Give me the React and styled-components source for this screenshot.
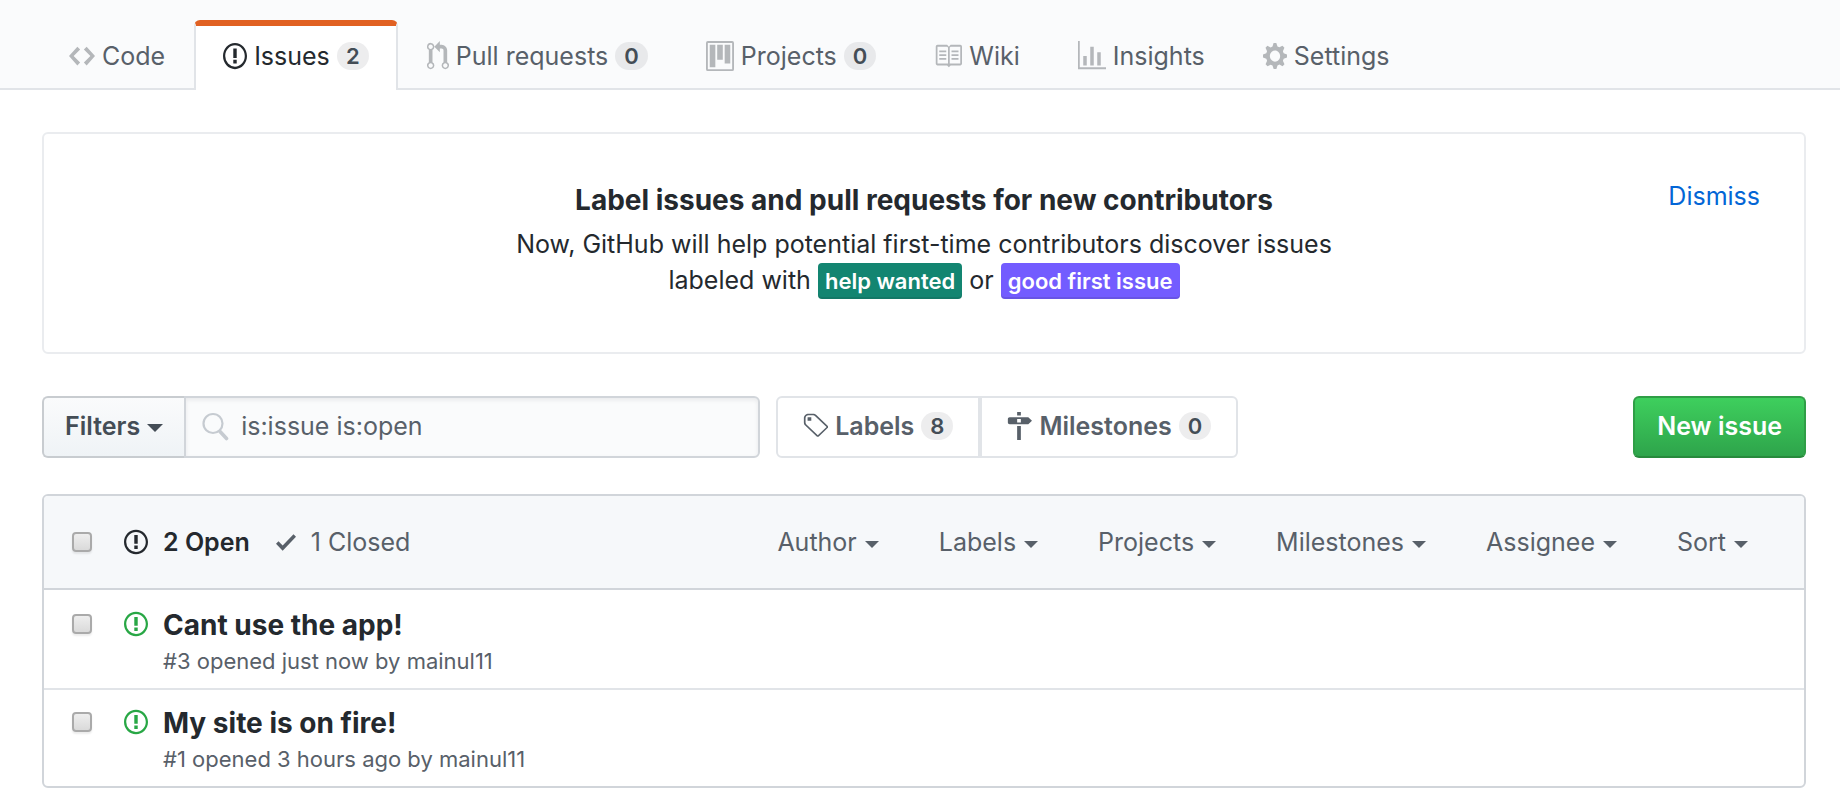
import React, { useState } from "react";
import styled, { createGlobalStyle, css } from "styled-components";

const GlobalStyle = createGlobalStyle`
  * {
    box-sizing: border-box;
  }
  body {
    margin: 0;
    background: #fff;
    color: #24292e;
    font-family: Inter, "Liberation Sans", sans-serif;
    font-size: 25px;
    line-height: 36px;
  }
  button, input {
    font: inherit;
  }
  a {
    color: inherit;
    text-decoration: none;
  }
`;

const paths = {
  code: [14, "M9.5 3L8 4.5 11.5 8 8 11.5 9.5 13 14 8 9.5 3zm-5 0L0 8l4.5 5L6 11.5 2.5 8 6 4.5 4.5 3z"],
  issue: [14, "M7 2.3c3.14 0 5.7 2.56 5.7 5.7s-2.56 5.7-5.7 5.7A5.71 5.71 0 0 1 1.3 8c0-3.14 2.56-5.7 5.7-5.7zM7 1C3.14 1 0 4.14 0 8s3.14 7 7 7 7-3.14 7-7-3.14-7-7-7zm1 3H6v5h2V4zm0 6H6v2h2v-2z"],
  pull: [12, "M11 11.28V5c-.03-.78-.34-1.47-.94-2.06C9.46 2.35 8.78 2.03 8 2H7V0L4 3l3 3V4h1c.27.02.48.11.69.31.21.2.3.42.31.69v6.28A1.993 1.993 0 0 0 10 15a1.993 1.993 0 0 0 1-3.72zm-1 2.92c-.66 0-1.2-.55-1.2-1.2 0-.65.55-1.2 1.2-1.2.65 0 1.2.55 1.2 1.2 0 .65-.55 1.2-1.2 1.2zM4 3c0-1.11-.89-2-2-2a1.993 1.993 0 0 0-1 3.72v6.56A1.993 1.993 0 0 0 2 15a1.993 1.993 0 0 0 1-3.72V4.72c.59-.34 1-.98 1-1.72zm-.8 10c0 .66-.55 1.2-1.2 1.2-.65 0-1.2-.55-1.2-1.2 0-.65.55-1.2 1.2-1.2.65 0 1.2.55 1.2 1.2zM2 4.2C1.34 4.2.8 3.65.8 3c0-.65.55-1.2 1.2-1.2.65 0 1.2.55 1.2 1.2 0 .65-.55 1.2-1.2 1.2z"],
  project: [15, "M10 12h3V2h-3v10zm-4-2h3V2H6v8zm-4 4h3V2H2v12zm-1 1h13V1H1v14zM14 0H1a1 1 0 0 0-1 1v14a1 1 0 0 0 1 1h13a1 1 0 0 0 1-1V1a1 1 0 0 0-1-1z"],
  book: [16, "M3 5h4v1H3V5zm0 3h4V7H3v1zm0 2h4V9H3v1zm11-5h-4v1h4V5zm0 2h-4v1h4V7zm0 2h-4v1h4V9zm2-6v9c0 .55-.45 1-1 1H9.5l-1 1-1-1H2c-.55 0-1-.45-1-1V3c0-.55.45-1 1-1h5.5l1 1 1-1H15c.55 0 1 .45 1 1zm-8 .5L7.5 3H2v9h6V3.5zm7-.5H9.5l-.5.5V12h6V3z"],
  graph: [16, "M16 14v1H0V0h1v14h15zM5 13H3V8h2v5zm4 0H7V3h2v10zm4 0h-2V6h2v7z"],
  gear: [14, "M14 8.77v-1.6l-1.94-.64-.45-1.09.88-1.84-1.13-1.13-1.81.91-1.09-.45-.69-1.92h-1.6l-.63 1.94-1.11.45-1.84-.88-1.13 1.13.91 1.81-.45 1.09L0 7.23v1.59l1.94.64.45 1.09-.88 1.84 1.13 1.13 1.81-.91 1.09.45.69 1.92h1.59l.63-1.94 1.11-.45 1.84.88 1.13-1.13-.92-1.81.47-1.09L14 8.75v.02zM7 11c-1.66 0-3-1.34-3-3s1.34-3 3-3 3 1.34 3 3-1.34 3-3 3z"],
  tag: [14, "M7.73 1.73C7.26 1.26 6.62 1 5.96 1H3.5C2.13 1 1 2.13 1 3.5v2.47c0 .66.27 1.3.73 1.77l6.06 6.06c.39.39 1.02.39 1.41 0l4.59-4.59a.996.996 0 0 0 0-1.41L7.73 1.73zM2.38 7.09c-.31-.3-.47-.7-.47-1.13V3.5c0-.88.72-1.59 1.59-1.59h2.47c.42 0 .83.16 1.13.47l6.14 6.13-4.73 4.73-6.13-6.15zM3.01 3h2v2H3V3h.01z"],
  milestone: [14, "M8 2H6V0h2v2zm4 5H2c-.55 0-1-.45-1-1V4c0-.55.45-1 1-1h10l2 2-2 2zM8 4H6v2h2V4zM6 16h2V8H6v8z"],
  check: [12, "M12 5l-8 8-4-4 1.5-1.5L4 10l6.5-6.5L12 5z"],
};

const Svg = styled.svg`
  display: block;
  flex: none;
  width: ${(p) => p.$width}px;
  height: ${(p) => p.$height}px;
  fill: currentColor;
`;

const Icon = ({ name, width = 24, height = 28 }) => (
  <Svg
    $width={width}
    $height={height}
    viewBox={`0 0 ${paths[name][0]} 16`}
    preserveAspectRatio="none"
    aria-hidden="true"
  >
    <path fillRule="evenodd" d={paths[name][1]} />
  </Svg>
);

const TabBar = styled.nav`
  display: flex;
  height: 90px;
  padding: 20px 40px 0;
  background: #fafbfc;
  border-bottom: 2px solid #e1e4e8;
`;

const Tab = styled.a`
  display: flex;
  align-items: center;
  gap: 7px;
  height: 70px;
  padding: 0 27px 5px;
  border: 2px solid transparent;
  border-top-width: 6px;
  border-bottom: 0;
  border-radius: 6px 6px 0 0;
  color: #586069;
  white-space: nowrap;

  ${Svg} {
    color: #b4b7ba;
  }

  ${(p) =>
    p.$active &&
    css`
      background: #fff;
      border-color: #e16122 #e1e4e8 transparent;
      color: #24292e;

      ${Svg} {
        color: inherit;
      }
    `}
`;

const Counter = styled.span`
  min-width: 32px;
  padding: 0 9px;
  border-radius: 14px;
  background: rgba(27, 31, 35, 0.08);
  color: #444d56;
  font-size: 22px;
  font-weight: 600;
  line-height: 28px;
  text-align: center;
`;

const Main = styled.main`
  padding: 42px 34px 22px 42px;
`;

const Banner = styled.section`
  display: grid;
  grid-template-columns: 1fr auto 1fr;
  min-height: 222px;
  padding: 44px;
  border: 2px solid #eaecef;
  border-radius: 6px;
  text-align: center;
`;

const BannerText = styled.div`
  grid-column: 2;
  max-width: 840px;

  h1 {
    margin: 0 0 4px;
    font-size: 28px;
    font-weight: 700;
    line-height: 44px;
  }
  p {
    margin: 0;
  }
`;

const Label = styled.span`
  display: inline-block;
  padding: 0 7px;
  border-radius: 4px;
  background: ${(p) => p.$color};
  box-shadow: inset 0 -2px 0 rgba(27, 31, 35, 0.12);
  color: #fff;
  font-size: 22px;
  font-weight: 600;
  line-height: 36px;
`;

const Dismiss = styled.button`
  align-self: start;
  justify-self: end;
  padding: 0;
  border: 0;
  background: none;
  color: #0366d6;
  cursor: pointer;
`;

const Toolbar = styled.div`
  display: flex;
  height: 62px;
  margin: 42px 0 36px;
`;

const FilterButton = styled.button`
  display: flex;
  align-items: center;
  gap: 7px;
  padding: 0 21px 2px;
  border: 2px solid #c8ccd0;
  border-right: 0;
  border-radius: 6px 0 0 6px;
  background: linear-gradient(#fafbfc, #eff3f6);
  color: #444d56;
  font-weight: 600;
`;

const Caret = styled.span`
  margin-top: 4px;
  border: ${(p) => p.$size}px solid transparent;
  border-top-color: currentColor;
  border-bottom: 0;
`;

const SearchBox = styled.label`
  display: flex;
  flex: 0 1 576px;
  align-items: center;
  gap: 12px;
  padding: 0 16px 2px;
  border: 2px solid #d1d5da;
  border-radius: 0 6px 6px 0;
  background: #fafbfc;
  box-shadow: inset 0 2px 4px rgba(27, 31, 35, 0.08);

  svg {
    flex: none;
    width: 27px;
    height: 29px;
    fill: none;
    stroke: #c6cbd1;
  }
  input {
    flex: 1;
    min-width: 0;
    padding: 0;
    border: 0;
    outline: 0;
    background: none;
    color: #586069;
  }
`;

const SubNav = styled.nav`
  display: flex;
  margin-left: 16px;
`;

const SubNavLink = styled.a`
  display: flex;
  align-items: center;
  gap: 7px;
  padding: 0 25px 2px 24px;
  border: 2px solid #e1e4e8;
  color: #586069;
  font-weight: 600;

  &:first-child {
    border-radius: 6px 0 0 6px;
  }
  &:last-child {
    border-radius: 0 6px 6px 0;
  }
`;

const NewIssue = styled.button`
  margin-left: auto;
  padding: 0 22px 2px;
  border: 2px solid #2f9e46;
  border-bottom-color: #278a3c;
  border-radius: 6px;
  background: linear-gradient(#3ecf5d, #2ea44b);
  color: #fff;
  font-weight: 600;
  white-space: nowrap;
`;

const List = styled.section`
  border: 2px solid #d1d5da;
  border-radius: 6px;
`;

const ListHeader = styled.header`
  display: flex;
  align-items: center;
  height: 94px;
  padding: 0 56px 0 28px;
  border-bottom: 2px solid #d1d5da;
  border-radius: 4px 4px 0 0;
  background: #f6f8fa;
`;

const Checkbox = styled.input.attrs({ type: "checkbox" })`
  appearance: none;
  flex: none;
  width: 20px;
  height: 20px;
  margin: 0 32px 0 0;
  border: 2px solid #aaa;
  border-radius: 4px;
  background: linear-gradient(#eee, #dadada);
  box-shadow: 0 2px 2px rgba(0, 0, 0, 0.08);

  &:checked {
    background: #0366d6;
  }
`;

const StateLink = styled.a`
  display: flex;
  align-items: center;
  gap: 15px;
  margin-right: 26px;
  color: ${(p) => (p.$selected ? "#24292e" : "#586069")};
  font-weight: ${(p) => (p.$selected ? 600 : 400)};
`;

const Menus = styled.div`
  display: flex;
  gap: 60px;
  margin-left: auto;
`;

const MenuButton = styled.button`
  display: flex;
  align-items: center;
  gap: 8px;
  padding: 0;
  border: 0;
  background: none;
  color: #586069;
`;

const Rows = styled.ul`
  margin: 0;
  padding: 0;
  list-style: none;
`;

const Row = styled.li`
  display: flex;
  height: 98px;
  padding: 22px 28px 0;
  border-top: 2px solid #e1e4e8;

  &:first-child {
    border-top-color: transparent;
  }
`;

const OpenMark = styled.span`
  display: flex;
  align-items: center;
  height: 20px;
  margin-right: 15px;
  color: #28a745;
`;

const RowText = styled.div`
  margin-top: -8px;
`;

const RowTitle = styled.a`
  display: block;
  font-size: 28px;
  font-weight: 700;
  line-height: 38px;
`;

const Meta = styled.div`
  color: #586069;
  font-size: 22px;
  line-height: 34px;
`;

const tabs = [
  { icon: "code", width: 26, text: "Code" },
  { icon: "issue", width: 24, text: "Issues", count: 2 },
  { icon: "pull", width: 22, text: "Pull requests", count: 0 },
  { icon: "project", width: 28, text: "Projects", count: 0 },
  { icon: "book", width: 28, text: "Wiki" },
  { icon: "graph", width: 28, text: "Insights" },
  { icon: "gear", width: 24, text: "Settings" },
];

const menus = ["Author", "Labels", "Projects", "Milestones", "Assignee", "Sort"];

const issues = [
  { id: 3, title: "Cant use the app!", when: "just now" },
  { id: 1, title: "My site is on fire!", when: "3 hours ago" },
];

const App = () => {
  const [query, setQuery] = useState("is:issue is:open");
  const [showBanner, setShowBanner] = useState(true);

  return (
    <>
      <GlobalStyle />
      <TabBar>
        {tabs.map((tab) => (
          <Tab key={tab.text} href="#" $active={tab.text === "Issues"}>
            <Icon name={tab.icon} width={tab.width} height={30} />
            {tab.text}
            {tab.count !== undefined && <Counter>{tab.count}</Counter>}
          </Tab>
        ))}
      </TabBar>
      <Main>
        {showBanner && (
          <Banner>
            <BannerText>
              <h1>Label issues and pull requests for new contributors</h1>
              <p>
                Now, GitHub will help potential first-time contributors discover issues
                <br />
                labeled with <Label $color="#138571">help wanted</Label> or{" "}
                <Label $color="#735cff">good first issue</Label>
              </p>
            </BannerText>
            <Dismiss onClick={() => setShowBanner(false)}>Dismiss</Dismiss>
          </Banner>
        )}
        <Toolbar>
          <FilterButton>
            Filters <Caret $size={8} />
          </FilterButton>
          <SearchBox>
            <svg viewBox="0 0 27 29" aria-hidden="true">
              <circle cx="11" cy="11.5" r="9.5" strokeWidth="2.2" />
              <path d="M18 19.5l6.5 7" strokeWidth="3.6" strokeLinecap="round" />
            </svg>
            <input
              type="text"
              aria-label="Search all issues"
              value={query}
              onChange={(e) => setQuery(e.target.value)}
            />
          </SearchBox>
          <SubNav>
            <SubNavLink href="#">
              <Icon name="tag" width={26} />
              Labels <Counter>8</Counter>
            </SubNavLink>
            <SubNavLink href="#">
              <Icon name="milestone" width={26} />
              Milestones <Counter>0</Counter>
            </SubNavLink>
          </SubNav>
          <NewIssue>New issue</NewIssue>
        </Toolbar>
        <List>
          <ListHeader>
            <Checkbox aria-label="Select all issues" />
            <StateLink href="#" $selected>
              <Icon name="issue" />2 Open
            </StateLink>
            <StateLink href="#">
              <Icon name="check" width={20} />1 Closed
            </StateLink>
            <Menus>
              {menus.map((name) => (
                <MenuButton key={name}>
                  {name} <Caret $size={7} />
                </MenuButton>
              ))}
            </Menus>
          </ListHeader>
          <Rows>
            {issues.map((issue) => (
              <Row key={issue.id}>
                <Checkbox aria-label={issue.title} />
                <OpenMark>
                  <Icon name="issue" />
                </OpenMark>
                <RowText>
                  <RowTitle href="#">{issue.title}</RowTitle>
                  <Meta>
                    #{issue.id} opened {issue.when} by <a href="#">mainul11</a>
                  </Meta>
                </RowText>
              </Row>
            ))}
          </Rows>
        </List>
      </Main>
    </>
  );
};

export default App;
